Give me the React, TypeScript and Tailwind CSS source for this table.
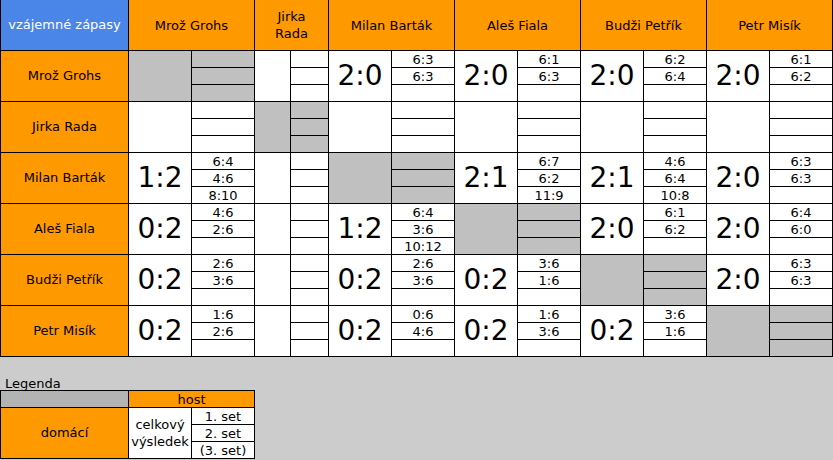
import React from "react";

type Match = { score: string; sets: string[] } | null;

const players = [
    "Mrož Grohs",
    "Jirka Rada",
    "Milan Barták",
    "Aleš Fiala",
    "Budži Petřík",
    "Petr Misík",
];

// results[row][col] – null = not played, "x" = same player
const results: (Match | "x")[][] = [
    ["x", null, { score: "2:0", sets: ["6:3", "6:3"] }, { score: "2:0", sets: ["6:1", "6:3"] }, { score: "2:0", sets: ["6:2", "6:4"] }, { score: "2:0", sets: ["6:1", "6:2"] }],
    [null, "x", null, null, null, null],
    [{ score: "1:2", sets: ["6:4", "4:6", "8:10"] }, null, "x", { score: "2:1", sets: ["6:7", "6:2", "11:9"] }, { score: "2:1", sets: ["4:6", "6:4", "10:8"] }, { score: "2:0", sets: ["6:3", "6:3"] }],
    [{ score: "0:2", sets: ["4:6", "2:6"] }, null, { score: "1:2", sets: ["6:4", "3:6", "10:12"] }, "x", { score: "2:0", sets: ["6:1", "6:2"] }, { score: "2:0", sets: ["6:4", "6:0"] }],
    [{ score: "0:2", sets: ["2:6", "3:6"] }, null, { score: "0:2", sets: ["2:6", "3:6"] }, { score: "0:2", sets: ["3:6", "1:6"] }, "x", { score: "2:0", sets: ["6:3", "6:3"] }],
    [{ score: "0:2", sets: ["1:6", "2:6"] }, null, { score: "0:2", sets: ["0:6", "4:6"] }, { score: "0:2", sets: ["1:6", "3:6"] }, { score: "0:2", sets: ["3:6", "1:6"] }, "x"],
];

function ResultCell({ match, narrow }: { match: Match | "x"; narrow: boolean }) {
    const same = match === "x";
    const bg = same ? "bg-[#c0c0c0]" : "bg-white";
    const m = same ? null : match;
    return (
        <div className={`flex gap-px ${narrow ? "w-[73px]" : "w-[125px]"}`}>
            <div
                className={`${narrow ? "w-[35px]" : "w-[62px]"} ${bg} flex items-center justify-center text-[28px] leading-none`}
            >
                {m ? m.score : ""}
            </div>
            <div className={`${narrow ? "w-[37px]" : "w-[62px]"} flex flex-col gap-px`}>
                {[0, 1, 2].map((i) => (
                    <div
                        key={i}
                        className={`h-[16px] ${bg} flex items-center justify-center text-[13px] leading-none pt-px`}
                    >
                        {m && m.sets[i] ? m.sets[i] : ""}
                    </div>
                ))}
            </div>
        </div>
    );
}

export default function App() {
    return (
        <div
            className="w-[833px] h-[460px] bg-[#cccccc] text-black"
            style={{ fontFamily: '"DejaVu Sans", Verdana, sans-serif' }}
        >
            <div className="w-[833px] bg-black px-px pb-px flex flex-col gap-px">
                {/*header*/}
                <div className="flex gap-px h-[50px] text-[13px]">
                    <div className="w-[127px] bg-[#4a86e8] text-white flex items-center justify-center">
                        vzájemné zápasy
                    </div>
                    {players.map((p, i) => (
                        <div
                            key={p}
                            className={`${i === 1 ? "w-[73px]" : "w-[125px]"} bg-[#ff9900] flex items-center justify-center text-center leading-[17px] px-1`}
                        >
                            {p}
                        </div>
                    ))}
                </div>
                {/*rows*/}
                {players.map((p, r) => (
                    <div key={p} className="flex gap-px h-[50px]">
                        <div className="w-[127px] bg-[#ff9900] flex items-center justify-center text-[13px]">
                            {p}
                        </div>
                        {results[r].map((m, c) => (
                            <ResultCell key={c} match={m} narrow={c === 1} />
                        ))}
                    </div>
                ))}
            </div>

            {/*legend*/}
            <div className="pl-[5px] pt-[19px] text-[13px] leading-[15px]">Legenda</div>
            <div className="w-[255px] bg-black p-px flex flex-col gap-px mt-[-1px] text-[13px]">
                <div className="flex gap-px h-[16px]">
                    <div className="w-[127px] bg-[#b3b3b3]"></div>
                    <div className="w-[125px] bg-[#ff9900] flex items-center justify-center leading-none">
                        host
                    </div>
                </div>
                <div className="flex gap-px h-[50px]">
                    <div className="w-[127px] bg-[#ff9900] flex items-center justify-center">
                        domácí
                    </div>
                    <div className="w-[62px] bg-white flex items-center justify-center text-center leading-[17px]">
                        celkový výsledek
                    </div>
                    <div className="w-[62px] flex flex-col gap-px">
                        {["1. set", "2. set", "(3. set)"].map((s) => (
                            <div key={s} className="h-[16px] bg-white flex items-center justify-center leading-none">
                                {s}
                            </div>
                        ))}
                    </div>
                </div>
            </div>
        </div>
    );
}
